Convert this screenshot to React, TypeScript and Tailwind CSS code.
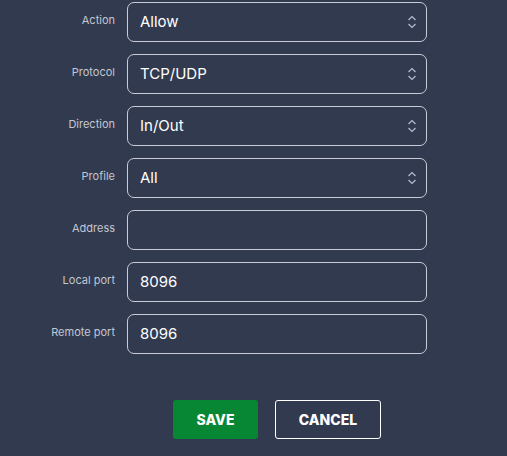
import React from "react";

type Field = { label: string; value: string; select?: boolean };

const fields: Field[] = [
  { label: "Action", value: "Allow", select: true },
  { label: "Protocol", value: "TCP/UDP", select: true },
  { label: "Direction", value: "In/Out", select: true },
  { label: "Profile", value: "All", select: true },
  { label: "Address", value: "" },
  { label: "Local port", value: "8096" },
  { label: "Remote port", value: "8096" },
];

function Chevrons() {
  return (
    <svg width="10" height="16" viewBox="0 0 10 16" fill="none" stroke="#b8bdc8" strokeWidth="1.2">
      <path d="M1.5 6 L5 2.5 L8.5 6" />
      <path d="M1.5 10 L5 13.5 L8.5 10" />
    </svg>
  );
}

export default function App() {
  return (
    <div
      className="w-[507px] h-[456px] bg-[#323a50] pt-[2px] overflow-hidden"
      style={{ fontFamily: "Inter, 'Noto Sans', sans-serif" }}
    >
      <div className="flex flex-col gap-[12px]">
        {fields.map((f) => (
          <div key={f.label} className="flex items-start">
            <div className="w-[115px] pt-[10px] text-right text-[11px] leading-[16px] text-[#c3c7d0]">
              {f.label}
            </div>
            <div className="ml-[12px] w-[300px] h-[40px] rounded-[7px] border border-[#c9ccd4] flex items-center pl-[12px] pr-[9px]">
              <span className="flex-1 text-[15px] text-white">{f.value}</span>
              {f.select && <Chevrons />}
            </div>
          </div>
        ))}
      </div>

      {/* buttons */}
      <div className="mt-[46px] ml-[173px] flex gap-[17px]">
        <button className="w-[85px] h-[39px] rounded-[3px] bg-[#078633] text-white text-[14px] font-extrabold">
          SAVE
        </button>
        <button className="w-[106px] h-[39px] rounded-[3px] border border-white text-white text-[14px] font-extrabold">
          CANCEL
        </button>
      </div>
    </div>
  );
}
